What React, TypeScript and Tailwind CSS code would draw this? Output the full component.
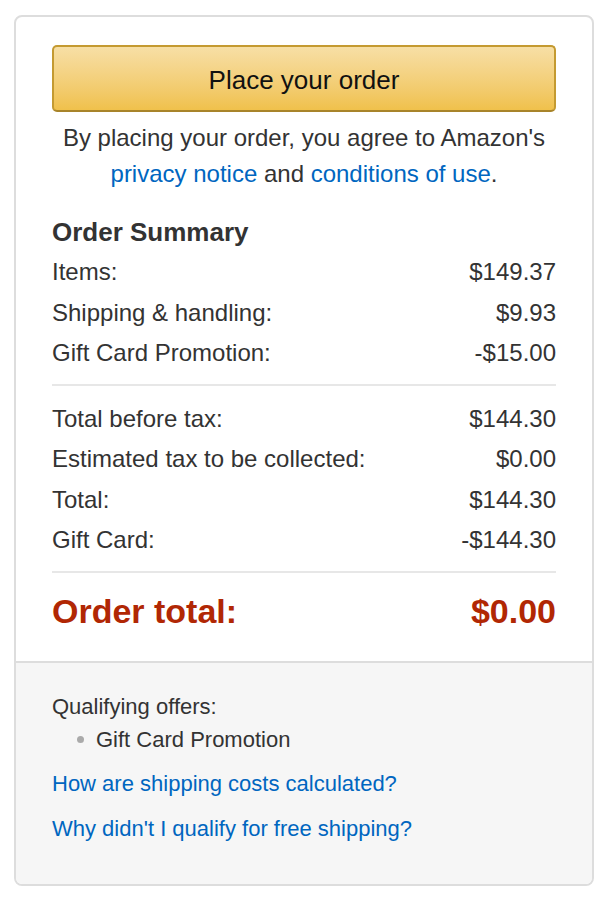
import React from "react";

const font = { fontFamily: '"Liberation Sans", Arial, sans-serif' };

function Row({ label, value }: { label: string; value: string }) {
  return (
    <div className="flex justify-between leading-[40.5px] text-[24px] text-[#333]">
      <span>{label}</span>
      <span>{value}</span>
    </div>
  );
}

export default function App() {
  return (
    <div className="bg-white w-[610px] h-[902px] pt-[15px] pl-[14px]" style={font}>
      <div className="w-[580px] border-2 border-[#dddddd] rounded-[8px] overflow-hidden bg-white">
        <div className="px-[36px] pt-[28px] pb-[30px]">
          <button className="w-full h-[67px] pt-[3px] rounded-[5px] border-2 border-[#c49a31] border-b-[#a8842a] bg-gradient-to-b from-[#f7dfa5] to-[#f0c14b] text-[26px] text-[#111] flex items-center justify-center">
            Place your order
          </button>
          <p className="mt-[8px] text-center text-[24px] leading-[36px] text-[#333]">
            By placing your order, you agree to Amazon's
            <br />
            <span className="text-[#0066c0]">privacy notice</span> and{" "}
            <span className="text-[#0066c0]">conditions of use</span>.
          </p>
          <h5 className="mt-[25px] text-[26px] leading-[30px] font-bold text-[#333]">Order Summary</h5>
          <div className="mt-[5px]">
            <Row label="Items:" value="$149.37" />
            <Row label="Shipping & handling:" value="$9.93" />
            <Row label="Gift Card Promotion:" value="-$15.00" />
          </div>
          <div className="mt-[10px] h-[2px] bg-[#e7e7e7]" />
          <div className="mt-[13px]">
            <Row label="Total before tax:" value="$144.30" />
            <Row label="Estimated tax to be collected:" value="$0.00" />
            <Row label="Total:" value="$144.30" />
            <Row label="Gift Card:" value="-$144.30" />
          </div>
          <div className="mt-[10px] h-[2px] bg-[#e7e7e7]" />
          <div className="mt-[18px] flex justify-between text-[34px] leading-[40px] font-bold text-[#b12704]">
            <span>Order total:</span>
            <span>$0.00</span>
          </div>
        </div>
        <div className="border-t-2 border-[#dddddd] bg-[#f6f6f6] px-[36px] pt-[27px] pb-[39px] text-[22px] leading-[33px]">
          <div className="text-[#333]">Qualifying offers:</div>
          <div className="flex items-center text-[#333]">
            <span className="ml-[25px] w-[7px] h-[7px] rounded-full bg-[#aaaaaa]" />
            <span className="ml-[12px]">Gift Card Promotion</span>
          </div>
          <div className="mt-[11px] text-[#0066c0]">How are shipping costs calculated?</div>
          <div className="mt-[12px] text-[#0066c0]">Why didn't I qualify for free shipping?</div>
        </div>
      </div>
    </div>
  );
}
